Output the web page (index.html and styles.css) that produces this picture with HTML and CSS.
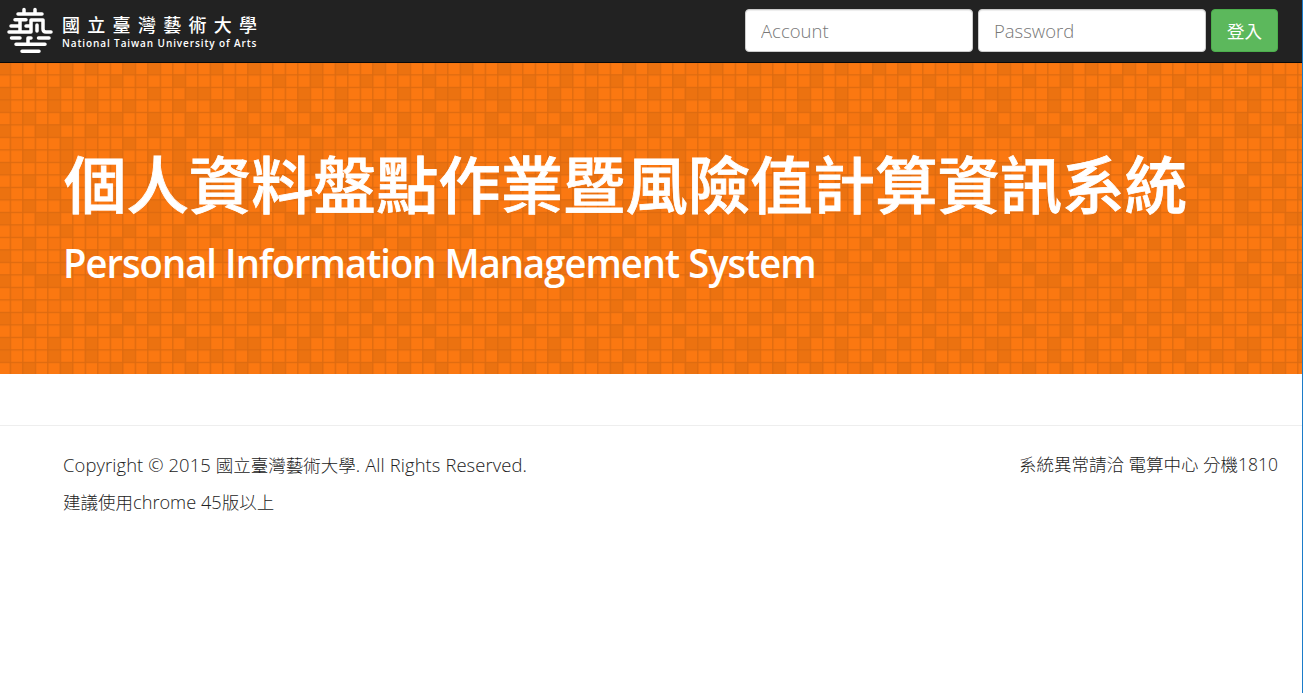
FILE: index.html
```html
<!DOCTYPE html>
<html lang="zh-Hant">
<head>
<meta charset="utf-8">
<title>個人資料盤點作業暨風險值計算資訊系統</title>
<link rel="stylesheet" href="styles.css">
</head>
<body>
<nav class="navbar">
  <a class="brand" href="#">
    <svg class="brand-mark" width="48" height="48" viewBox="0 0 48 48" fill="none" stroke="#fff" stroke-width="3.500" stroke-linecap="round" stroke-linejoin="round">
      <path d="M12 7H36M18 2.500V7M29 2.500V7"/>
      <path d="M9 12.800H20M5 19H14M14 13V24M3 25H25V19M20 19H25V13H37V22Q37 25 40 25H45M31 18V24"/>
      <path d="M5.500 31H14M32.500 31H43M22 31V37M22 31H25M10 37.300H39M16 44.300H33"/>
    </svg>
    <span class="brand-text">
      <span class="brand-zh">國立臺灣藝術大學</span>
      <span class="brand-en">National Taiwan University of Arts</span>
    </span>
  </a>
  <form class="login">
    <input class="field" type="text" placeholder="Account">
    <input class="field" type="password" placeholder="Password">
    <button class="submit" type="button">登入</button>
  </form>
</nav>
<header class="hero">
  <svg class="hero-tiles" width="100%" height="100%" aria-hidden="true">
    <defs>
      <pattern id="tiles" width="20" height="20" patternUnits="userSpaceOnUse" patternTransform="translate(-2.500 -.9) scale(12.5)">
        <rect width="20" height="20" fill="#fb7811"/>
        <path stroke="#f67511" d="M1 .5h1M15 .5h1M11 1.500h1M18 1.500h1M18 3.500h1M1 4.500h1M8 4.500h1M9 5.500h1M1 6.500h1M6 6.500h1M7 6.500h1M4 7.500h1M18 8.500h1M15 9.500h1M9 12.500h1M1 13.500h1M7 13.500h1M4 14.500h1M14 15.500h1M18 15.500h1M4 16.500h1M8 16.500h1M9 17.500h1M1 18.500h1M6 18.500h2M9 18.500h1M4 19.500h1M12 19.500h1"/>
        <path stroke="#ec7210" d="M0 .5h1M5 .5h1M7 .5h1M10 .5h1M12 .5h1M17 .5h1
          M2 1.500h1M5 1.500h1M9 1.500h1M14 1.500h1
          M0 2.500h1M4 2.500h1M7 2.500h1M12 2.500h1M15 2.500h2M19 2.500h1
          M0 3.500h1M4 3.500h1M7 3.500h1M10 3.500h1M14 3.500h1M17 3.500h1
          M2 4.500h1M5 4.500h1M9 4.500h1M12 4.500h1M15 4.500h1M19 4.500h1
          M0 5.500h1M3 5.500h2M7 5.500h1M12 5.500h1M15 5.500h1M19 5.500h1
          M5 6.500h1M10 6.500h1M14 6.500h1M17 6.500h1
          M2 7.500h1M5 7.500h1M9 7.500h1M12 7.500h1M14 7.500h1M17 7.500h1
          M0 8.500h1M5 8.500h1M10 8.500h1M14 8.500h2
          M2 9.500h1M7 9.500h1M12 9.500h1M16 9.500h2M19 9.500h1
          M0 10.500h1M4 10.500h1M7 10.500h1M9 10.500h1M14 10.500h1M17 10.500h1M19 10.500h1
          M2 11.500h1M5 11.500h1M10 11.500h1M12 11.500h1M15 11.500h1M19 11.500h1
          M0 12.500h1M3 12.500h2M7 12.500h1M12 12.500h1M15 12.500h1M19 12.500h1
          M5 13.500h1M10 13.500h1M14 13.500h1M17 13.500h1
          M2 14.500h1M9 14.500h1M12 14.500h1M14 14.500h1
          M0 15.500h1M5 15.500h1M7 15.500h1M10 15.500h1M17 15.500h1
          M2 16.500h1M5 16.500h1M9 16.500h1M12 16.500h1M15 16.500h1M19 16.500h1
          M0 17.500h1M3 17.500h2M7 17.500h1M12 17.500h1M15 17.500h1M19 17.500h1
          M5 18.500h1M10 18.500h1M14 18.500h1M17 18.500h1
          M2 19.500h1M9 19.500h1M14 19.500h1"/>
      </pattern>
      <pattern id="grout" width="12.5" height="12.5" patternUnits="userSpaceOnUse" patternTransform="translate(-2.800 -1.200)">
        <path d="M0 0H12.500V1.300H1.300V12.500H0Z" fill="#dc6a10"/>
      </pattern>
    </defs>
    <rect width="100%" height="100%" fill="url(#tiles)"/>
    <rect width="100%" height="100%" fill="url(#grout)"/>
  </svg>
  <div class="hero-body">
    <h1 class="title">個人資料盤點作業暨風險值計算資訊系統</h1>
    <h2 class="subtitle">Personal Information Management System</h2>
  </div>
</header>
<footer class="footer">
  <div class="footer-row">
    <p class="line"><span class="latin">Copyright © 2015 </span>國立臺灣藝術大學<span class="latin">. All Rights Reserved.</span></p>
    <p class="line">系統異常請洽 電算中心 分機1810</p>
  </div>
  <p class="line">建議使用<span class="browser">chrome 45</span>版以上</p>
</footer>
</body>
</html>
```
FILE: styles.css
```css
* { box-sizing: border-box; }
html { background: #fff; }
body {
  margin: 0;
  height: 693px;
  overflow: hidden;
  border-right: 1px solid #1b7cc9;
  color: #222;
  font: 300 17.5px/27px "Open Sans", "Noto Sans CJK TC", sans-serif;
}
.navbar {
  display: flex;
  justify-content: space-between;
  height: 63px;
  padding: 0 24px 0 6px;
  background: #222;
  border-bottom: 1px solid #080808;
}
.brand {
  display: flex;
  gap: 8px;
  padding-top: 7px;
  color: #fff;
  text-decoration: none;
}
.brand-mark { flex: none; }
.brand-text { display: flex; flex-direction: column; padding-top: 6px; }
.brand-zh {
  font: 500 18px/23px "Noto Sans CJK TC", sans-serif;
  letter-spacing: 7.300px;
  white-space: nowrap;
}
.brand-en {
  font: 600 10px/14px "Open Sans", sans-serif;
  letter-spacing: .9px;
  white-space: nowrap;
}
.login { display: flex; gap: 5px; padding-top: 9px; }
.field {
  width: 228px;
  height: 43px;
  padding: 6px 15px;
  border: 1px solid #ccc;
  border-radius: 4px;
  background: #fff;
  box-shadow: inset 0 1px 1px rgba(0, 0, 0, .075);
  font: 300 18.500px/27px "Open Sans", sans-serif;
}
.field::placeholder { color: #777; opacity: 1; }
.submit {
  width: 67px;
  height: 43px;
  padding: 0;
  border: 1px solid #4cae4c;
  border-radius: 4px;
  background: #5cb85c;
  color: #fff;
  font: 400 17.5px/27px "Noto Sans CJK TC", sans-serif;
}
.hero { display: grid; height: 311px; overflow: hidden; }
.hero-tiles, .hero-body { grid-area: 1 / 1; }
.hero-tiles { display: block; height: 311px; }
.hero-body { z-index: 1; padding: 85px 0 0 64px; color: #fff; }
.title {
  margin: 0;
  font: 500 62.4px/69px "Noto Sans CJK TC", sans-serif;
  -webkit-text-stroke: .8px #fff;
  white-space: nowrap;
}
.subtitle {
  margin: 23px 0 0 -1px;
  font: 600 40px/45px "Open Sans", sans-serif;
  letter-spacing: -1px;
  white-space: nowrap;
  transform: scaleX(.953);
  transform-origin: 0 50%;
}
.footer { margin-top: 51px; padding: 25px 24px 0 63px; border-top: 1px solid #eee; }
.footer-row { display: flex; justify-content: space-between; }
.line { margin: 0 0 10px; white-space: pre; }
.latin { font-size: 18.400px; letter-spacing: .1px; }
.browser { font-size: 18.200px; }
```
